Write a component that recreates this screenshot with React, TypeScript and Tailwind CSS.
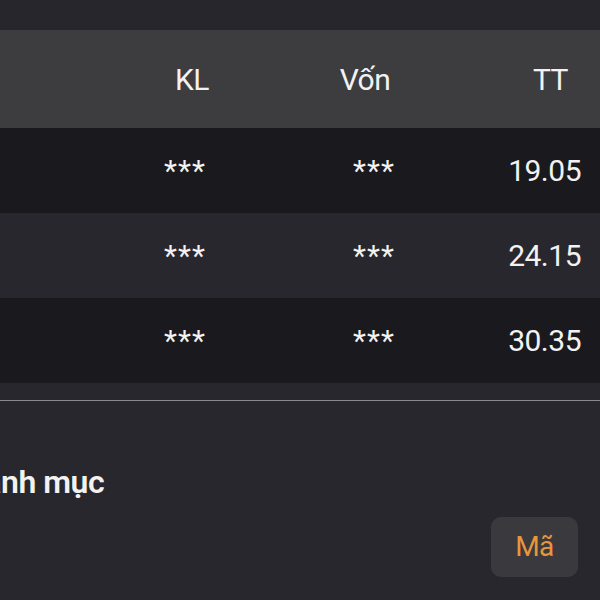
import React from "react";

const rows = [
  { kl: "***", von: "***", tt: "19.05", dark: true },
  { kl: "***", von: "***", tt: "24.15", dark: false },
  { kl: "***", von: "***", tt: "30.35", dark: true },
];

export default function App() {
  return (
    <div
      className="w-[600px] h-[600px] overflow-hidden bg-[#28272d] text-[#f2f2f2]"
      style={{ fontFamily: "Roboto, 'Noto Sans', sans-serif" }}
    >
      {/* top strip */}
      <div className="h-[30px] bg-[#27262c]" />

      {/* table header */}
      <div className="flex items-center h-[98px] bg-[#3d3d40] pl-[142px] text-[30px] tracking-[-0.5px]">
        <span className="w-[100px] text-center">KL</span>
        <span className="ml-[60px] w-[126px] text-center">Vốn</span>
        <span className="flex-1 text-right pr-[32px]">TT</span>
      </div>

      {/* rows */}
      {rows.map((r, i) => (
        <div
          key={i}
          className={`flex items-center h-[85px] pl-[142px] text-[30px] tracking-[-0.5px] ${
            r.dark ? "bg-[#1a191d]" : "bg-[#28272d]"
          }`}
        >
          <span className="w-[100px] text-center pr-[14px] tracking-[1px]">{r.kl}</span>
          <span className="ml-[60px] w-[126px] text-center pl-[18px] tracking-[1px]">{r.von}</span>
          <span className="flex-1 text-right pr-[19px]">{r.tt}</span>
        </div>
      ))}

      <div className="h-[17px]" />
      <div className="h-px bg-[#8a8a8e]" />

      {/* section */}
      <div className="pt-[63px]">
        <div className="-ml-[36px] text-[32px] font-semibold leading-[37px] tracking-[-0.5px] whitespace-nowrap">
          Danh mục
        </div>
        <div className="flex justify-end pr-[22px] mt-[16px]">
          <button className="w-[87px] h-[60px] rounded-[10px] bg-[#3a3a3e] text-[#e8953c] text-[28px] tracking-[-0.5px]">
            Mã
          </button>
        </div>
      </div>
    </div>
  );
}
